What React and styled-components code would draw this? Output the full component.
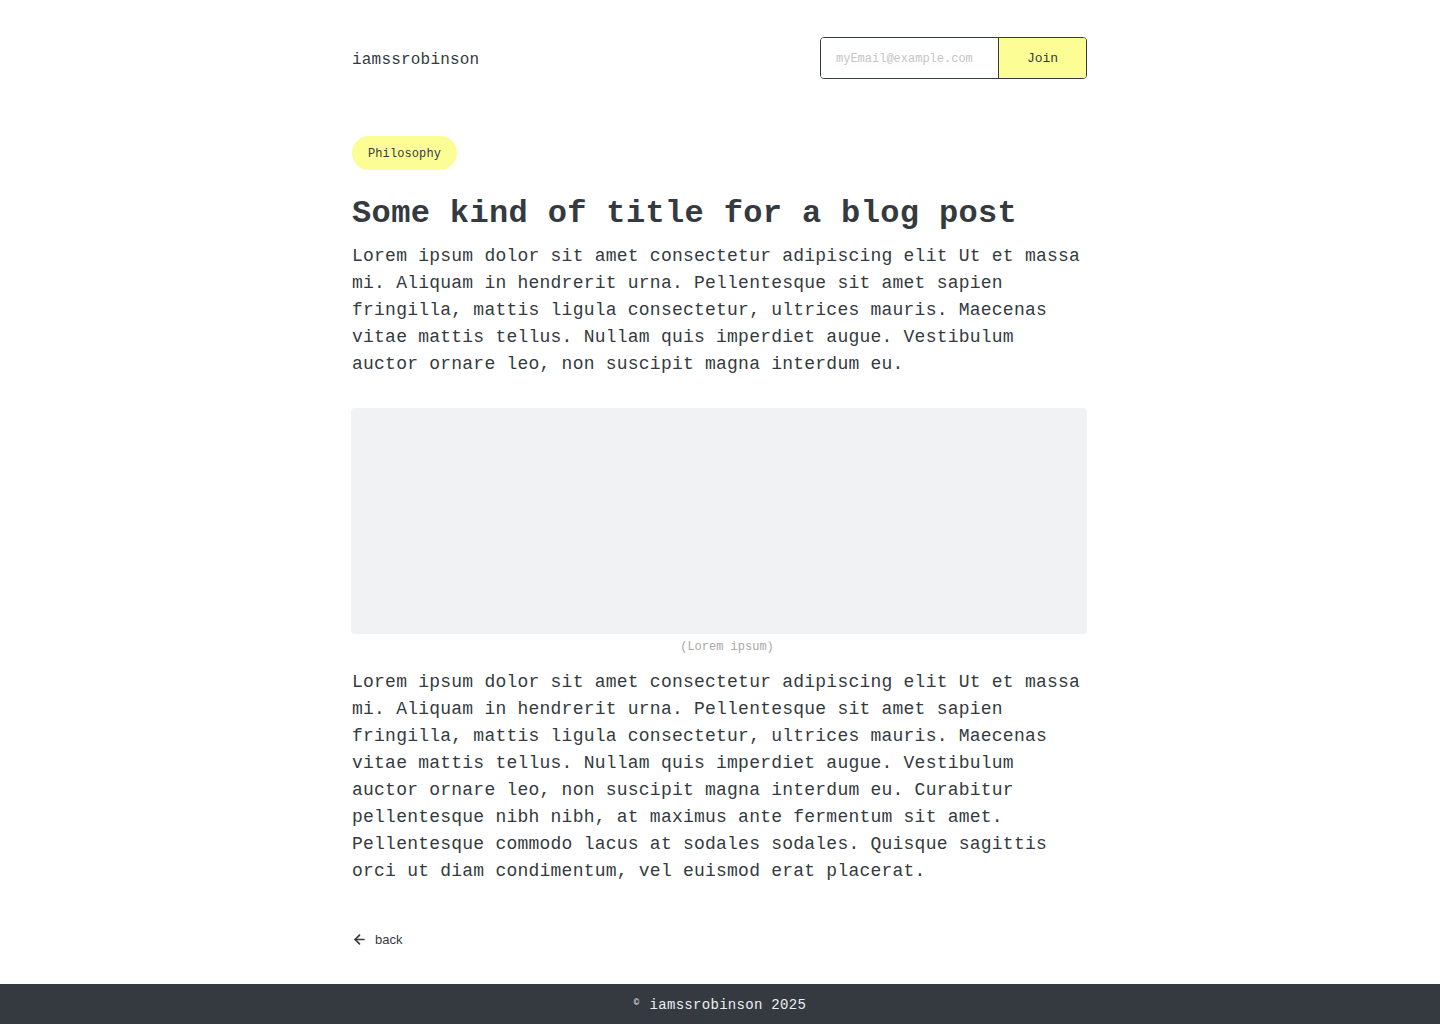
import React from 'react';
import styled, { createGlobalStyle } from 'styled-components';
import { ArrowLeft } from 'lucide-react';

const GlobalStyle = createGlobalStyle`
  html, body {
    margin: 0;
    padding: 0;
    background: #ffffff;
  }
  body {
    font-family: "Liberation Mono", "DejaVu Sans Mono", monospace;
    color: #343a40;
  }
  * {
    box-sizing: border-box;
  }
`;

const Page = styled.div`
  min-height: 100vh;
  display: flex;
  flex-direction: column;
`;

const Container = styled.div`
  width: 736px;
  margin: 0 auto;
  flex: 1;
  display: flex;
  flex-direction: column;
`;

const Header = styled.header`
  display: flex;
  align-items: center;
  justify-content: space-between;
  padding-top: 37px;
  height: 79px;
`;

const Logo = styled.a`
  padding-top: 4px;
  font-size: 16px;
  letter-spacing: 0.2px;
  color: #343a40;
  text-decoration: none;
`;

const SignupForm = styled.form`
  display: flex;
  height: 42px;
  width: 267px;
  margin-right: 1px;
  border: 1px solid #343a40;
  border-radius: 4px;
  overflow: hidden;
`;

const EmailInput = styled.input`
  flex: 1;
  min-width: 0;
  border: none;
  outline: none;
  padding: 2px 15px 0;
  font-family: inherit;
  font-size: 12px;
  color: #343a40;
  background: #fff;

  &::placeholder {
    color: #c4c4c4;
  }
`;

const JoinButton = styled.button`
  width: 88px;
  padding-top: 2px;
  border: none;
  border-left: 1px solid #343a40;
  background: #fdfd96;
  font-family: inherit;
  font-size: 13px;
  color: #343a40;
  cursor: pointer;
`;

const Article = styled.article`
  display: flex;
  flex-direction: column;
  align-items: flex-start;
  padding-top: 57px;
`;

const Tag = styled.span`
  display: inline-flex;
  align-items: center;
  height: 34px;
  padding: 2px 16px 0;
  border-radius: 17px;
  background: #fdfd96;
  font-size: 12px;
  letter-spacing: 0.1px;
  color: #343a40;
`;

const Title = styled.h1`
  margin: 25px 0 10px;
  font-size: 32px;
  line-height: 38px;
  font-weight: 700;
  letter-spacing: 0.36px;
  color: #343a40;
`;

const Paragraph = styled.p`
  margin: 0;
  font-size: 18px;
  line-height: 27px;
  letter-spacing: 0.23px;
  color: #343a40;
`;

const Figure = styled.figure`
  width: 100%;
  margin: 30px 0 14px;
`;

const ImagePlaceholder = styled.div`
  width: 736px;
  margin-left: -1px;
  height: 226px;
  background: #f1f2f4;
  border-radius: 4px;
`;

const Caption = styled.figcaption`
  margin-top: 5px;
  padding-left: 14px;
  text-align: center;
  font-size: 12px;
  line-height: 16px;
  color: #a8a8a8;
`;

const BackLink = styled.a`
  display: inline-flex;
  align-items: center;
  gap: 8px;
  margin: 47px 0 0;
  font-family: "Liberation Sans", Arial, sans-serif;
  font-size: 13px;
  color: #343a40;
  text-decoration: none;
`;

const Footer = styled.footer`
  height: 40px;
  padding-top: 2px;
  background: #343a40;
  display: flex;
  align-items: center;
  justify-content: center;
  font-size: 14px;
  letter-spacing: 0.3px;
  color: #eceef0;
`;

const Copy = styled.sup`
  font-size: 9px;
  margin-right: 10px;
  position: relative;
  top: -2px;
`;

const intro =
  'Lorem ipsum dolor sit amet consectetur adipiscing elit Ut et massa mi. Aliquam in hendrerit urna. Pellentesque sit amet sapien fringilla, mattis ligula consectetur, ultrices mauris. Maecenas vitae mattis tellus. Nullam quis imperdiet augue. Vestibulum auctor ornare leo, non suscipit magna interdum eu.';

const body =
  intro +
  ' Curabitur pellentesque nibh nibh, at maximus ante fermentum sit amet. Pellentesque commodo lacus at sodales sodales. Quisque sagittis orci ut diam condimentum, vel euismod erat placerat.';

const App = () => {
  return (
    <Page>
      <GlobalStyle />
      <Container>
        <Header>
          <Logo href="#">iamssrobinson</Logo>
          <SignupForm onSubmit={(e) => e.preventDefault()}>
            <EmailInput type="email" placeholder="myEmail@example.com" />
            <JoinButton type="submit">Join</JoinButton>
          </SignupForm>
        </Header>

        <Article>
          <Tag>Philosophy</Tag>
          <Title>Some kind of title for a blog post</Title>
          <Paragraph>{intro}</Paragraph>
          <Figure>
            <ImagePlaceholder />
            <Caption>(Lorem ipsum)</Caption>
          </Figure>
          <Paragraph>{body}</Paragraph>
          <BackLink href="#">
            <ArrowLeft size={15} strokeWidth={2.75} />
            back
          </BackLink>
        </Article>
      </Container>
      <Footer>
        <Copy>©</Copy>
        iamssrobinson 2025
      </Footer>
    </Page>
  );
};

export default App;
